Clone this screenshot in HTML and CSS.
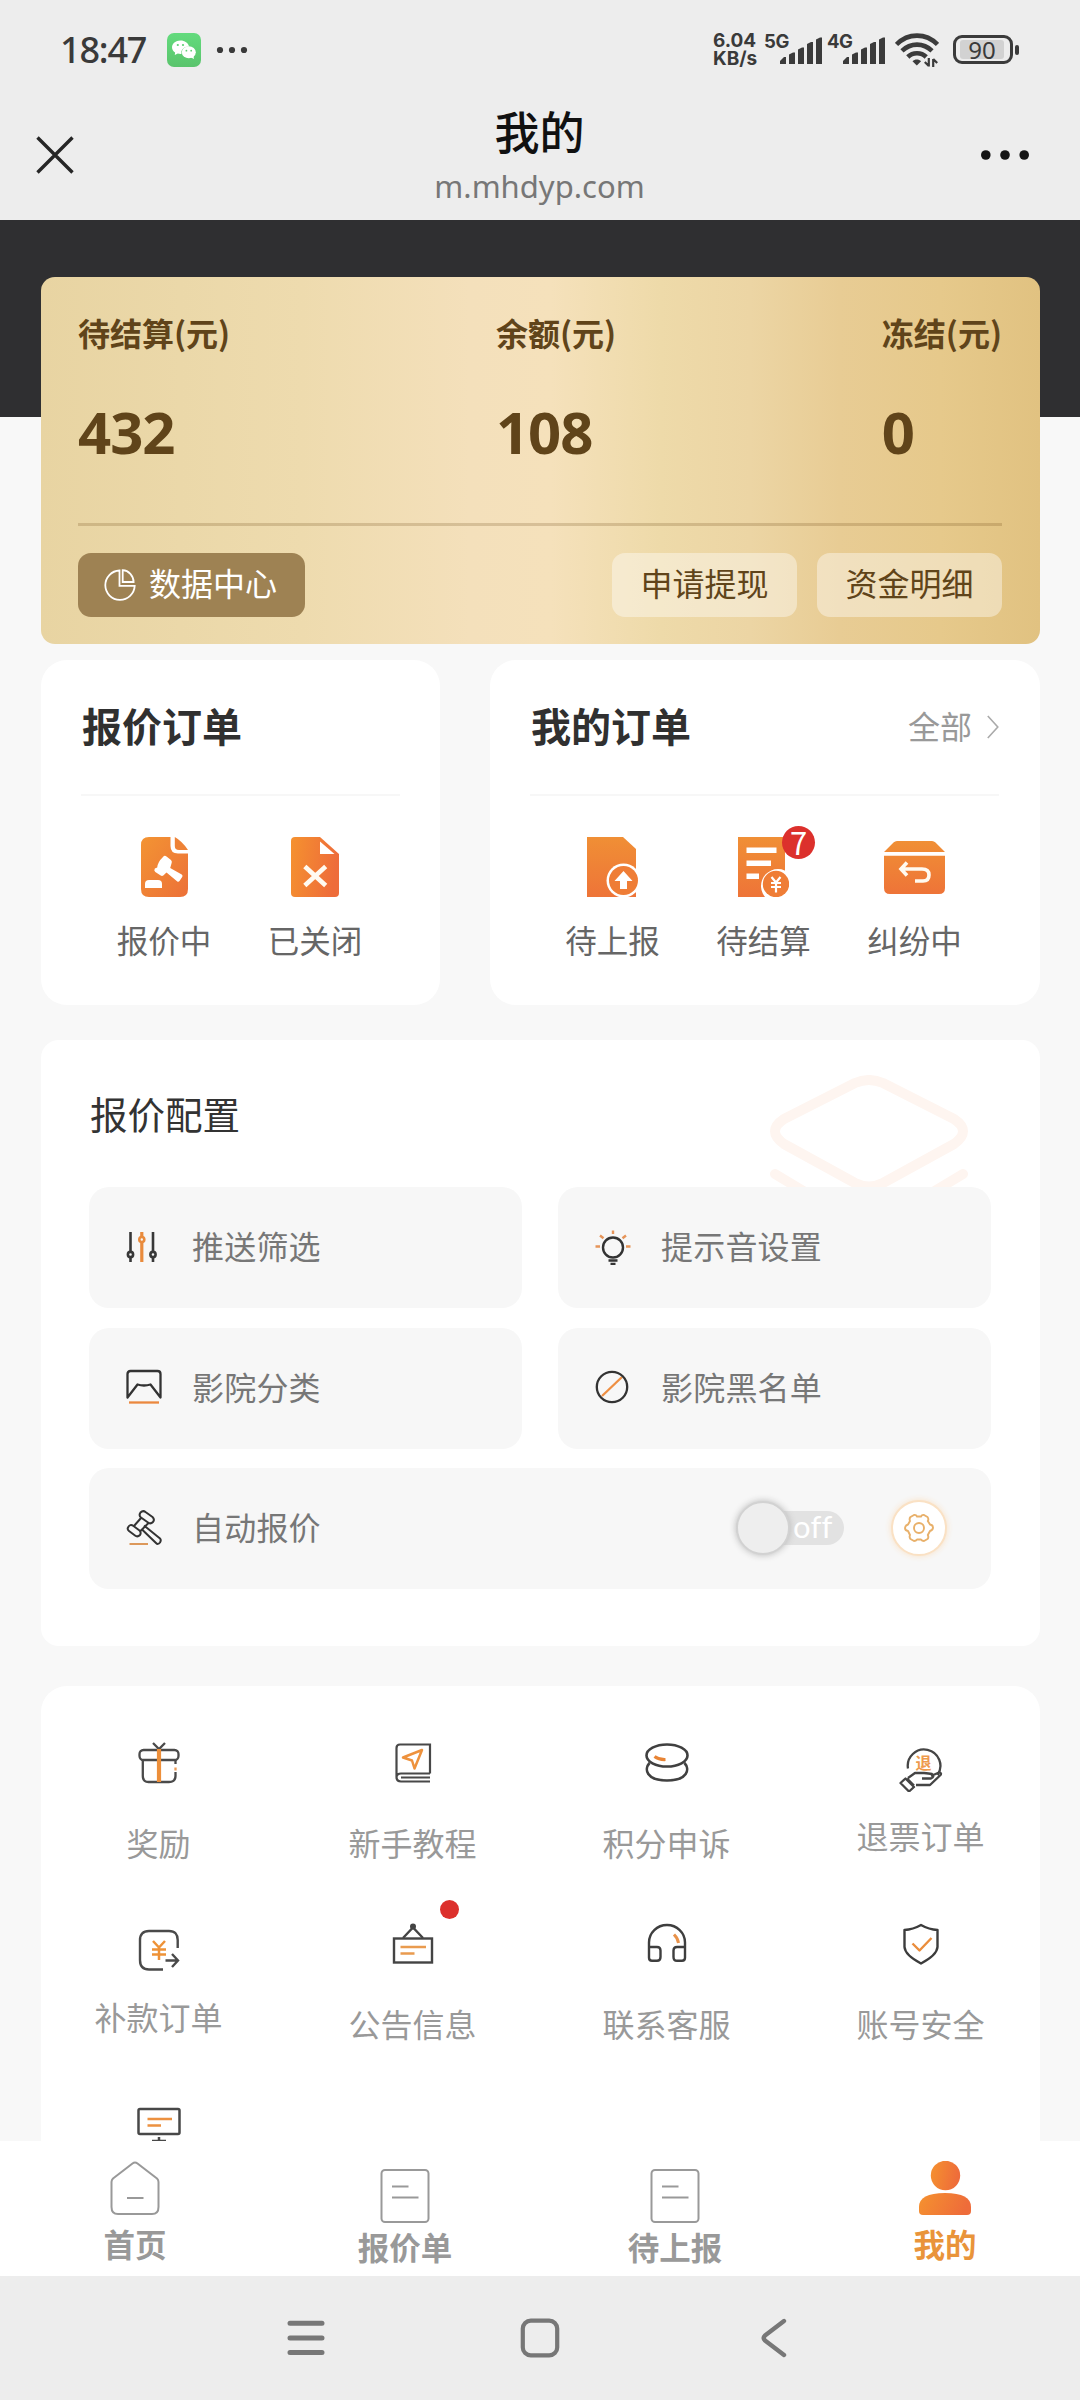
FILE: index.html
```html
<!DOCTYPE html>
<html lang="zh-CN">
<head>
<meta charset="utf-8">
<title>我的</title>
<link rel="stylesheet" href="styles.css">
</head>
<body>
<svg class="defs" width="0" height="0" aria-hidden="true">
  <defs>
    <linearGradient id="orange-v" x1="0" y1="0" x2="0" y2="1"><stop offset="0" stop-color="#f08f35"/><stop offset="1" stop-color="#ee7438"/></linearGradient>
    <linearGradient id="orange-h" x1="0" y1="0" x2="1" y2="0.2"><stop offset="0" stop-color="#f5922f"/><stop offset="1" stop-color="#ee6c3a"/></linearGradient>
    <linearGradient id="orange-d" x1="0" y1="0" x2="1" y2="1"><stop offset="0" stop-color="#f39433"/><stop offset="1" stop-color="#ec7038"/></linearGradient>
    <linearGradient id="green" x1="0" y1="0" x2="0" y2="1"><stop offset="0" stop-color="#63db7d"/><stop offset="1" stop-color="#5ac46c"/></linearGradient>
  </defs>
</svg>

<header class="top">
  <div class="status">
    <span class="clock">18:47</span>
    <svg class="wechat" viewBox="0 0 34 34">
      <rect width="34" height="34" rx="7" fill="url(#green)"/>
      <path d="M13.500 7.500C8.600 7.500 5 10.500 5 14.300c0 2.200 1.200 4.100 3.100 5.300L7.800 22l3-1.500c.9.3 1.800.4 2.700.4h1c-.9-4.300 2.600-7.600 7.600-7.500C21.200 9.900 17.800 7.500 13.500 7.500Z" fill="#fff"/>
      <ellipse cx="21.800" cy="19.300" rx="7" ry="6" fill="#fff"/>
      <path d="M23 24l4 2-.6-3.500Z" fill="#fff"/>
      <g fill="#5bcf73"><circle cx="10.800" cy="12" r="1.100"/><circle cx="16" cy="12" r="1.100"/><circle cx="19.400" cy="17.700" r=".9"/><circle cx="24.200" cy="17.700" r=".9"/></g>
    </svg>
    <svg class="status-dots" viewBox="0 0 32 8" fill="#3a3a3a"><circle cx="4" cy="4" r="3.100"/><circle cx="16" cy="4" r="3.100"/><circle cx="28" cy="4" r="3.100"/></svg>
    <div class="status-right">
      <div class="speed"><span>6.04</span><span>KB/s</span></div>
      <div class="signal">
        <span>5G</span>
        <svg viewBox="0 0 42 27" fill="#3b3b3b"><path d="M0 27v-3l4-4h2v7ZM9 27V17.500l4-2h2V27ZM18 27V12.500l4-2h2V27ZM27 27V7l4-2h2v22ZM36 27V2.500L40 .5h2V27Z"/></svg>
      </div>
      <div class="signal signal-2">
        <span>4G</span>
        <svg viewBox="0 0 42 27" fill="#3b3b3b"><path d="M0 27v-3l4-4h2v7ZM9 27V17.500l4-2h2V27ZM18 27V12.500l4-2h2V27ZM27 27V7l4-2h2v22ZM36 27V2.500L40 .5h2V27Z"/></svg>
      </div>
      <svg class="wifi" viewBox="0 0 44 34" fill="none" stroke="#3b3b3b" stroke-width="4.600">
        <path d="M1.500 11.500C13 -.4 31 -.4 42.500 11.500M7 17.800c8.500-8.300 21.500-8.300 30 0M12.800 24c5-5 13.400-5 18.400 0"/>
        <path d="M21.800 32.500l-4.300-4.300c2.300-2.200 6.300-2.200 8.600 0Z" fill="#3b3b3b" stroke="none"/>
        <path d="M33.800 25v8.500M33.800 33l-4-4M38.200 34v-8M38.200 26l4 4" stroke-width="2.200"/>
      </svg>
      <div class="battery"><span>90</span></div>
      <i class="battery-tip"></i>
    </div>
  </div>
  <div class="titlebar">
    <svg class="close" viewBox="0 0 38 38" stroke="#262626" stroke-width="3.400"><path d="M1.500 1.500l35 35M36.500 1.500l-35 35"/></svg>
    <div class="title"><h1>我的</h1><p>m.mhdyp.com</p></div>
    <svg class="more" viewBox="0 0 48 10" fill="#161616"><circle cx="4.800" cy="5" r="4.800"/><circle cx="24" cy="5" r="4.800"/><circle cx="43.200" cy="5" r="4.800"/></svg>
  </div>
</header>

<main>
  <section class="wallet">
    <div class="figures">
      <div><span>待结算(元)</span><b>432</b></div>
      <div><span>余额(元)</span><b>108</b></div>
      <div><span>冻结(元)</span><b>0</b></div>
    </div>
    <div class="wallet-actions">
      <button class="pill data">
        <svg viewBox="0 0 32 32" fill="none" stroke="#fff" stroke-width="1.800"><path d="M15.500 1.500A14.700 14.700 0 1 0 30.700 16.800H15.500Z"/><path d="M18.700 1.200V13H29.600A11.500 12 0 0 0 18.700 1.200Z"/></svg>
        数据中心
      </button>
      <button class="pill">申请提现</button>
      <button class="pill">资金明细</button>
    </div>
  </section>

  <div class="orders">
    <section class="card order-card quote">
      <div class="order-head"><h2>报价订单</h2></div>
      <div class="order-items">
        <div class="order-item">
          <svg width="47" height="60" viewBox="0 0 47 60">
            <path d="M8 0H29.500V9Q29.500 16.500 37 16.500H47V52Q47 60 39 60H8Q0 60 0 52V8Q0 0 8 0Z" fill="url(#orange-d)"/>
            <path d="M33.800 0Q41 4 47 13H38Q33.800 13 33.800 9Z" fill="#ee8236"/>
            <g fill="#fff"><path d="M22 20q1.500-2 3.500-.5l4.500 3.500q1.500 1.500.5 3.500l-1.300 4.500 11.500 6.500q1.500 1 .5 2.500l-2.700 4q-1 1.500-2.500.3L25.500 35.500l-3.200 3q-1.300 1-3-.2l-5-3.300q-1.700-1.500-.5-3.500l2.400-1q.5-5.500 5.800-10.500Z"/><path d="M4 51v-4q0-4 4-4h9q4 0 4 4v4Z"/></g>
          </svg>
          <span>报价中</span>
        </div>
        <div class="order-item">
          <svg width="48" height="60" viewBox="0 0 48 60"><path d="M4 0H29L48 17V56Q48 60 44 60H4Q0 60 0 56V4Q0 0 4 0Z" fill="url(#orange-h)"/><path d="M29 4.500V17H43.500Z" fill="#fff"/><path d="M15.500 31l17.500 16M33 31l-17.500 16" stroke="#fffaf0" stroke-width="4.600" stroke-linecap="square" fill="none"/></svg>
          <span>已关闭</span>
        </div>
      </div>
    </section>
    <section class="card order-card mine">
      <div class="order-head"><h2>我的订单</h2><a>全部<svg viewBox="0 0 12 24" fill="none" stroke="#aaa" stroke-width="1.600"><path d="M.8 1l10 11-10 11"/></svg></a></div>
      <div class="order-items">
        <div class="order-item">
          <svg width="51" height="60" viewBox="0 0 51 60"><path d="M0 0H36L49 12V60H0Z" fill="url(#orange-v)"/><circle cx="36.500" cy="43.500" r="17" fill="#fff"/><circle cx="36.500" cy="43.500" r="14.500" fill="#ef7d36"/><path d="M36.500 34l9 10h-5.500v8h-7v-8h-5.500Z" fill="#fff"/></svg>
          <span>待上报</span>
        </div>
        <div class="order-item">
          <svg width="51" height="60" viewBox="0 0 51 60"><path d="M0 0H47V60H0Z" fill="url(#orange-v)"/><path d="M8.500 10.500h30V16h-30ZM8.500 23.500H33V29H8.500ZM8.500 36.500H21V42H8.500Z" fill="#fff"/><path d="M29 62a17 17 0 1 1 22 0Z" fill="#fff"/><circle cx="38" cy="47" r="13.200" fill="#ef7d36"/><path d="M33.500 40l4.500 5.500 4.500-5.500M38 45.500V55.500M33 46h10M33 50h10" stroke="#fff" stroke-width="2.200" fill="none"/></svg>
          <em class="badge">7</em>
          <span>待结算</span>
        </div>
        <div class="order-item">
          <svg width="61" height="60" viewBox="0 0 61 60"><path d="M13 4H48Q50 4 51.500 5.500L61 15H0L9.500 5.500Q11 4 13 4ZM0 18.800H61V51Q61 57 55 57H6Q0 57 0 51Z" fill="url(#orange-v)"/><path d="M23 25.500l-6 6.500 6 6.500M18 32H38q7 0 7 6t-6 6h-8" stroke="#fffaf0" stroke-width="3.600" fill="none"/></svg>
          <span>纠纷中</span>
        </div>
      </div>
    </section>
  </div>

  <section class="card config">
    <svg class="layers" viewBox="0 0 198 118" fill="none" stroke="#fef5f0" stroke-width="10" stroke-linecap="round" stroke-linejoin="round"><path d="M85 8Q99 2 113 8L184 44Q202 56 184 69L113 108Q99 115 85 108L14 69Q-4 56 14 44ZM5 99L40 120M193 99L158 120"/></svg>
    <h2>报价配置</h2>
    <div class="settings">
      <div class="setting">
        <svg viewBox="0 0 36 36" fill="none" stroke="#383838" stroke-width="2.600"><path d="M4.500 3V22M4.500 29v4M27 3V22M27 29v4"/><circle cx="4.500" cy="25.500" r="2.600"/><circle cx="27" cy="25.500" r="2.600"/><g stroke="#e98b3c"><path d="M15.800 3V7.500M15.800 13.500V33" stroke-width="3.200"/><circle cx="15.800" cy="10.500" r="2.500"/></g></svg>
        推送筛选
      </div>
      <div class="setting">
        <svg viewBox="0 0 36 36" fill="none" stroke="#333" stroke-width="2.400"><circle cx="18" cy="18.500" r="10"/><path d="M13.500 31.500h9M15.500 35h5"/><path d="M18 1.500V5M5 6.500l3.500 2.800M31 6.500l-3.500 2.800M.5 17.500H5M31 17.500h4.500" stroke="#e6955a"/></svg>
        提示音设置
      </div>
      <div class="setting">
        <svg viewBox="0 0 36 36" fill="none" stroke="#333" stroke-width="2.300" stroke-linejoin="round"><path d="M1.500 28.500V5Q1.500 2 4.500 2H31.500Q34.500 2 34.500 5V28.500L24.500 15.500Q18 17.500 11.500 15.500Z"/><path d="M3 33.500H33" stroke="#eb883f"/></svg>
        影院分类
      </div>
      <div class="setting">
        <svg viewBox="0 0 36 36" fill="none" stroke="#333" stroke-width="2.300"><path d="M7 27L27 8" stroke="#ee8f43"/><circle cx="17" cy="18" r="15.200"/></svg>
        影院黑名单
      </div>
      <div class="setting wide">
        <svg viewBox="0 0 36 36" fill="none" stroke="#333" stroke-width="2" stroke-linejoin="round"><path d="M14.500 2.500Q17 0 19.500 2l7 5q2.500 2.500.5 5-2.500 2.500-5 .5l-7-5q-2.500-2-.5-5ZM2 17.500q2-4 5.500-1.500l6 4.500q2 2 .5 4.500-2.500 2.500-5 .5l-6-4.500Q1 19.500 2 17.500ZM15 8L8 16M22.500 13l-8 8M18 15.500L34 28.500q1.500 1.500 0 4-2 2.500-4 .5L15.500 19"/><path d="M3.500 34H22" stroke="#dc985b"/></svg>
        自动报价
        <div class="switch"><span>off</span><i></i></div>
        <div class="gear"><svg viewBox="0 0 30 30" fill="none" stroke="#e8b06a" stroke-width="1.900" stroke-linejoin="round"><path d="M10 2Q12 1.500 13 3.500H17Q18 1.500 20 2L23.500 4Q25 6 23.800 8L26 11.500Q29 12 29 14.500T26 18L23.800 22Q25 24.500 23.500 26L20 28Q18 28 17 26.500H13Q12 28 10 28L6.500 26Q5 24.500 6 22L4 18Q1 17.500 1 15T4 11.500L6 8Q5 5.500 6.500 4Z"/><circle cx="15" cy="15" r="5"/></svg></div>
      </div>
    </div>
  </section>

  <section class="card tools">
    <div class="tool">
      <svg viewBox="0 0 44 44" fill="none" stroke="#4a4a4a" stroke-width="2.300"><rect x="2.500" y="9" width="39" height="10" rx="4"/><path d="M5.800 19V35Q5.800 41 11.500 41H32Q38.500 41 38.500 35V31M38.500 19v4M16 2l6 6 6-6"/><path d="M38.500 26.500v3" stroke="#ee9b56"/><path d="M22 8V41" stroke="#ed8f3a" stroke-width="4.200"/></svg>
      <span>奖励</span>
    </div>
    <div class="tool">
      <svg viewBox="0 0 44 44" fill="none" stroke="#484848" stroke-width="2.200"><path d="M39 32.500V3.500H9Q5.500 3.500 5.500 7V36Q5.500 40.500 10 40.500H39M39 32.500H10Q6 32.500 5.500 36M10 36.500H39"/><path d="M31 9L12 16.500 21 19.500 23.500 27.500Z" stroke="#ee923d" stroke-width="2.500" stroke-linejoin="round"/></svg>
      <span>新手教程</span>
    </div>
    <div class="tool">
      <svg viewBox="0 0 44 44" fill="none" stroke="#404040" stroke-width="2.600"><ellipse cx="22" cy="14.500" rx="20.500" ry="11"/><path d="M4.500 22C-1 28 1 39.500 22 39.500S45 28 39.500 22"/><path d="M9.500 15.500Q14 18.800 20.500 18.500" stroke="#e88435" stroke-width="3.200"/></svg>
      <span>积分申诉</span>
    </div>
    <div class="tool lowered">
      <svg viewBox="0 0 44 44" fill="none" stroke="#454545" stroke-width="2.300" stroke-linejoin="round"><path d="M9 20.500A16.300 16.300 0 1 1 38.500 27M9 30l7-5h9q5 .5 8 1 3 3-1 4.500h-9M32 28l8-3.500q3 .2 1.500 2.500L31 37H17M1.500 35l5-4.500L15 39l-5 4.500ZM8 30.500L15 37.500"/><text class="refund-mark" x="24.500" y="21">退</text></svg>
      <span>退票订单</span>
    </div>
    <div class="tool lowered">
      <svg viewBox="0 0 44 44" fill="none" stroke="#4a4a4a" stroke-width="2.400"><path d="M40.700 19V11Q40.700 2 32 2H12Q3 2 3 11V31Q3 40.500 12 40.500H26M28.500 31.500H40M35 25l6 6.500-6 6.500"/><path d="M16 12l6 6.500 6-6.500M22 18.500V31M15 20.500H29M15 25.500H29" stroke="#ee9237" stroke-width="2.500"/></svg>
      <span>补款订单</span>
    </div>
    <div class="tool">
      <i class="dot"></i>
      <svg viewBox="0 0 44 44" fill="none" stroke="#444" stroke-width="2.400"><rect x="3" y="16.500" width="38" height="24"/><path d="M12 16L22 5.500 32 16"/><circle cx="22" cy="4.500" r="1.800" fill="#444"/><path d="M9.500 25H35M9.500 31.500H23.500" stroke="#e99b4f" stroke-width="2.600"/></svg>
      <span>公告信息</span>
    </div>
    <div class="tool">
      <svg viewBox="0 0 44 44" fill="none" stroke="#3e3e3e" stroke-width="2.400"><path d="M4 24V20.500A18 17.500 0 0 1 40 20.500V24M4 25H12Q15.500 25 15.500 28.500V35Q15.500 38.800 12 38.800H7Q4 38.800 4 35.800ZM40 25H32Q28.500 25 28.500 28.500V35Q28.500 38.800 32 38.800H37Q40 38.800 40 35.800Z"/><path d="M29 12.500Q33 16.500 33.500 21" stroke="#e8924a" stroke-width="3"/></svg>
      <span>联系客服</span>
    </div>
    <div class="tool">
      <svg viewBox="0 0 44 44" fill="none" stroke="#3c3c3c" stroke-width="2.400" stroke-linejoin="round"><path d="M22 3Q14 7.500 5.500 8V25Q6 33 22 41.500Q38 33 38.500 25V8Q30 7.500 22 3Z"/><path d="M13.500 21.500l7 7L32.500 16" stroke="#ea8d3c"/></svg>
      <span>账号安全</span>
    </div>
    <div class="tool">
      <svg viewBox="0 0 44 44" fill="none" stroke="#484848" stroke-width="2.500"><rect x="1.500" y="6" width="41" height="25" rx="1.500"/><path d="M22 34V38M15 38H29"/><path d="M10.500 16H35M10.500 22.500H24" stroke="#ec9140"/></svg>
    </div>
  </section>
</main>

<nav class="tabs">
  <div class="tab"><svg viewBox="0 0 54 54" fill="none" stroke="#999" stroke-width="2" stroke-linejoin="round"><path d="M24.500 2.500Q27 .5 29.500 2.500L49 17.500Q50.500 19 50.500 21V46Q50.500 53 44 53H10Q3.500 53 3.500 46V21Q3.500 19 5 17.500ZM19 37H35.500"/></svg><span>首页</span></div>
  <div class="tab low"><svg viewBox="0 0 54 54" fill="none" stroke="#999" stroke-width="2"><rect x="3.500" y="1" width="47" height="52" rx="3.500"/><path d="M14 17.500H30.500M14 28.500H40.500"/></svg><span>报价单</span></div>
  <div class="tab low"><svg viewBox="0 0 54 54" fill="none" stroke="#999" stroke-width="2"><rect x="3.500" y="1" width="47" height="52" rx="3.500"/><path d="M14 17.500H30.500M14 28.500H40.500"/></svg><span>待上报</span></div>
  <div class="tab active"><svg viewBox="0 0 54 54" fill="url(#orange-h)"><circle cx="27.500" cy="14.500" r="14.700"/><path d="M1 46Q1 32 27 32T53 46V50Q53 54 49 54H5Q1 54 1 50Z"/></svg><span>我的</span></div>
</nav>

<footer class="system">
  <svg viewBox="0 0 40 40" stroke="#777" stroke-width="5" stroke-linecap="round"><path d="M4 5.200H36M4 20H36M4 34.500H36"/></svg>
  <svg viewBox="0 0 40 40" fill="none" stroke="#777" stroke-width="4.200"><rect x="2.800" y="2.600" width="34.400" height="34.800" rx="8"/></svg>
  <svg viewBox="0 0 40 40" fill="none" stroke="#777" stroke-width="4.400" stroke-linecap="round" stroke-linejoin="round"><path d="M30 3L11 17.500Q8.500 20 11 22.500L30 37"/></svg>
</footer>
</body>
</html>
```
FILE: styles.css
```css
* { box-sizing: border-box; margin: 0; padding: 0; }
body {
  width: 1080px; height: 2400px; overflow: hidden;
  display: flex; flex-direction: column;
  background: #f8f8f8; color: #333;
  font-family: "Noto Sans CJK SC", "Noto Sans", sans-serif;
  font-size: 32px;
}
svg { display: block; flex: none; }
.defs { position: absolute; }
i, em { font-style: normal; }
button { border: 0; font: inherit; }

/* status bar and title bar */
.top { height: 220px; flex: none; background: #ededed; }
.status { height: 100px; display: flex; align-items: center; padding-left: 60px; font-family: "Noto Sans", sans-serif; color: #3a3a3a; }
.clock { width: 107px; font-size: 36px; font-weight: 500; letter-spacing: -1.200px; line-height: 50px; }
.wechat { width: 34px; height: 34px; }
.status-dots { width: 32px; height: 8px; margin-left: 15px; }
.status-right { margin-left: auto; width: 367px; height: 34px; display: flex; }
.speed { width: 51px; display: flex; flex-direction: column; font: 700 19px/18px Inter, sans-serif; margin-top: -1px; }
.signal { width: 58px; display: flex; margin-right: 5px; }
.signal span { width: 16px; font: 700 18.500px/18px Inter, sans-serif; letter-spacing: -.4px; margin-top: -1px; white-space: nowrap; }
.signal svg { width: 42px; height: 27px; margin-top: 4px; }
.signal-2 { margin-right: 10px; }
.wifi { width: 44px; height: 34px; }
.battery { width: 60px; height: 29px; margin: 2px 0 0 14px; border: 3px solid #3b3b3b; border-radius: 9px; padding: 2px 3px; }
.battery span { display: block; width: 44px; height: 19px; margin-left: 1px; border-radius: 3px; background: #d2d2d2; font-size: 24px; line-height: 19px; text-align: center; }
.battery-tip { width: 4px; height: 10px; margin: 12px 0 0 2px; border-radius: 2px; background: #3b3b3b; }
.titlebar { height: 120px; display: flex; padding: 0 51px 0 36px; }
.close { width: 38px; height: 38px; margin-top: 36px; }
.title { flex: 1; text-align: center; padding-left: 24px; }
.title h1 { font-size: 45px; line-height: 62px; font-weight: 500; color: #111; }
.title p { font: 31px/40px "Noto Sans", sans-serif; color: #777; margin-top: 4px; }
.more { width: 48px; height: 10px; margin-top: 50px; }

/* page body */
main { height: 1921px; flex: none; overflow: hidden; padding: 57px 40px 0 41px; background: linear-gradient(#2f2f31 197px, #f8f8f8 197px); }
.card { background: #fff; }

.wallet {
  height: 367px; border-radius: 14px; padding: 0 38px 0 37px; color: #60441a;
  background: linear-gradient(90deg, #e8d4a2 0%, #ebd8a9 14%, #eedbae 26%, #f4e0bb 43%, #f5e1bb 51%, #eedaa9 62%, #ecd5a4 71%, #e8cc94 80%, #e6c98b 90%, #e1c281 100%);
}
.figures { height: 249px; padding-top: 33px; display: flex; justify-content: space-between; border-bottom: 3px solid rgba(110, 74, 24, .22); }
.figures div { display: flex; flex-direction: column; }
.figures span { font-size: 32px; line-height: 44px; font-weight: 600; }
.figures b { font: 700 58px/80px "Noto Sans", sans-serif; letter-spacing: -1px; margin-top: 38px; }
.wallet-actions { display: flex; gap: 20px; padding-top: 27px; }
.pill { width: 185px; height: 64px; border-radius: 13px; padding-bottom: 5px; background: rgba(255, 255, 255, .4); color: #60441a; font-size: 32px; line-height: 59px; }
.pill.data { width: 227px; margin-right: auto; display: flex; align-items: center; gap: 13px; padding-left: 26px; background: #9e8253; color: #fff; }
.pill.data svg { width: 32px; height: 32px; margin-top: 4px; }

.orders { display: flex; justify-content: space-between; margin-top: 16px; }
.order-card { height: 345px; border-radius: 26px; padding: 0 40px; }
.quote { width: 399px; }
.mine { width: 550px; padding: 0 41px 0 40px; }
.order-head { height: 136px; padding-top: 35px; display: flex; justify-content: space-between; border-bottom: 2px solid #f7f7f7; }
.order-head h2 { font-size: 40px; line-height: 60px; font-weight: 700; color: #303030; padding-left: 1px; }
.order-head a { height: 60px; display: flex; align-items: center; gap: 15px; color: #999; line-height: 60px; }
.order-head a svg { width: 12px; height: 24px; margin-top: 3px; }
.order-items { display: flex; justify-content: center; padding-top: 41px; margin-left: -2px; }
.order-item { position: relative; width: 151px; display: flex; flex-direction: column; align-items: center; color: #666; }
.order-item span { line-height: 44px; margin-top: 20px; font-size: 31.500px; white-space: nowrap; }
.badge { position: absolute; left: 94px; top: -11px; width: 33px; height: 33px; border-radius: 50%; background: #dc302c; color: #fff; text-align: center; font-size: 31px; line-height: 31px; }

.config { position: relative; height: 606px; margin-top: 35px; border-radius: 18px; padding: 48px 49px 0 48px; }
.config h2 { position: relative; font-size: 37.500px; line-height: 50px; font-weight: 400; padding-left: 1px; }
.layers { position: absolute; left: 729px; top: 35px; width: 198px; height: 118px; }
.settings { position: relative; margin-top: 49px; display: grid; grid-template-columns: 433px 433px; justify-content: space-between; row-gap: 19.500px; }
.setting { height: 121px; border-radius: 20px; background: #f7f7f7; display: flex; align-items: center; gap: 30px; padding: 0 0 5px 37px; color: #777; font-size: 32px; letter-spacing: .2px; }
.setting > svg { width: 36px; height: 36px; margin-top: 3px; }
.setting.wide { grid-column: 1 / 3; padding-right: 44px; }
.switch { position: relative; width: 108px; height: 34px; margin: 4px 0 0 auto; border-radius: 17px; background: #e2e2e2; padding-left: 57px; font: 31px/31px Lato, sans-serif; color: #fff; }
.switch i { position: absolute; left: 0; top: -10px; width: 54px; height: 54px; border-radius: 50%; background: #eee; border: 2px solid #d2d2d2; box-shadow: 0 0 7px #b8b8b8; }
.gear { width: 56px; height: 56px; margin: 4px 0 0 17px; border-radius: 50%; background: #fff; border: 2px solid #fae1c4; box-shadow: 0 0 6px #fae1c4; display: grid; place-items: center; }
.gear svg { width: 30px; height: 30px; }

.tools { height: 560px; margin: 40px -1px 0 0; padding: 55px 2px 0 0; border-radius: 26px; display: grid; grid-template-columns: repeat(4, 254px); grid-auto-rows: 181px; justify-content: center; width: 999px; }
.tool { position: relative; display: flex; flex-direction: column; align-items: center; color: #999; }
.tool svg { width: 44px; height: 44px; }
.tool span { line-height: 44px; margin-top: 35px; }
.lowered { padding-top: 7px; }
.lowered span { margin-top: 21px; }
.refund-mark { font: 700 16px "Noto Sans CJK SC", sans-serif; fill: #ee9a4d; stroke: none; text-anchor: middle; }
.dot { position: absolute; left: 154px; top: -22px; width: 19px; height: 19px; border-radius: 50%; background: #dc302c; }

/* bottom tabs */
.tabs { height: 135px; flex: none; background: #fff; display: grid; grid-template-columns: repeat(4, 1fr); }
.tab { display: flex; flex-direction: column; align-items: center; padding-top: 20px; color: #999; font-weight: 600; }
.tab svg { width: 54px; height: 54px; }
.tab span { line-height: 40px; margin-top: 8px; font-size: 31.500px; }
.tab.low { padding-top: 28px; }
.tab.low span { margin-top: 3px; }
.tab.active { color: #e9943a; }

.system { flex: 1; background: #ededed; display: flex; justify-content: center; gap: 194px; padding-top: 42px; }
.system svg { width: 40px; height: 40px; }
```
